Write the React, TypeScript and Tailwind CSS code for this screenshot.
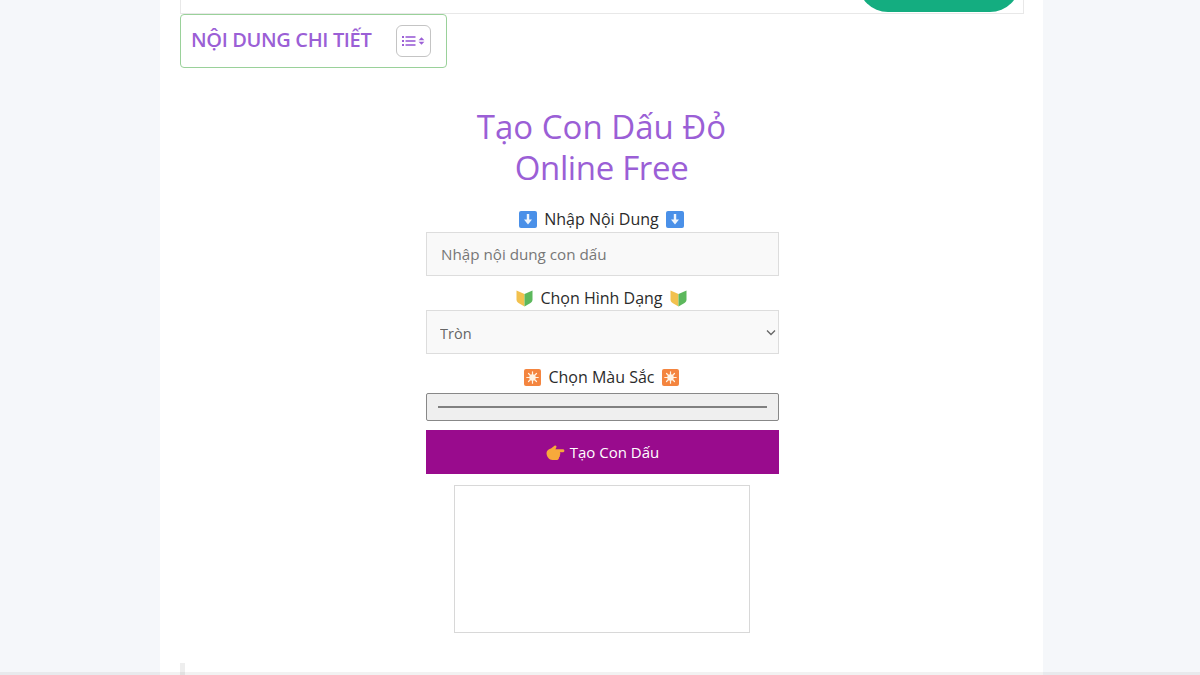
import React from 'react';

const font = "font-['Open_Sans','Noto_Sans',sans-serif]";

const ArrowIcon = () => (
  <svg width="18" height="17" viewBox="0 0 18 17">
    <rect x="0" y="0" width="18" height="17" rx="2" fill="#4a90e8" />
    <path d="M7.8 3H10.2V8.5H13L9 13.5L5 8.5H7.8Z" fill="#eef5fd" />
  </svg>
);

const ShieldIcon = () => (
  <svg width="17" height="18" viewBox="0 0 17 18">
    <path d="M0.5 1.5L8.5 5V17.5L2.5 14C1.2 13.2 0.5 12 0.5 10.5Z" fill="#f2c14e" />
    <path d="M16.5 1.5L8.5 5V17.5L14.5 14C15.8 13.2 16.5 12 16.5 10.5Z" fill="#5cb85c" />
  </svg>
);

const StarIcon = () => (
  <svg width="17" height="17" viewBox="0 0 17 17">
    <rect width="17" height="17" rx="2" fill="#f4853f" />
    <circle cx="8.5" cy="8.5" r="3.2" fill="#fff3e4" />
    <g stroke="#fff3e4" strokeWidth="1.2" strokeLinecap="round">
      <path d="M8.5 2.8V14.2" />
      <path d="M2.8 8.5H14.2" />
      <path d="M4.5 4.5L12.5 12.5" />
      <path d="M12.5 4.5L4.5 12.5" />
    </g>
  </svg>
);

const HandIcon = () => (
  <svg width="19" height="16" viewBox="0 0 19 16">
    <path
      d="M0.5 8C0.5 5.5 3 4.2 5 3.6L8.5 0.8C9.8 0 11.2 1.2 10.2 2.8L9.4 4.2H17.2C18.8 4.2 18.8 7.2 17.2 7.2H13.8C14.6 8 14.5 9.4 13.8 10C14.2 10.9 13.8 12 13 12.3C13.2 13.6 12.3 15 11 15H6.5C3 15 0.5 11.5 0.5 8Z"
      fill="#f7a93b"
    />
  </svg>
);

const Label: React.FC<{ icon: React.ReactNode; text: string }> = ({ icon, text }) => (
  <div className="flex items-center justify-center gap-[7px] pr-[2px] text-[16px] leading-[22px] text-[#2b2b2b]">
    {icon}
    <span>{text}</span>
    {icon}
  </div>
);

export default function App() {
  return (
    <div className={`relative h-[675px] overflow-hidden bg-[#f5f7fa] ${font}`}>
      <div className="ml-[160px] w-[883px] h-[675px] bg-white px-[20px]">
        <div className="h-[14px] w-[844px] overflow-hidden border-x border-b border-[#e8e8e8] flex justify-end pr-[3px]">
          <div className="w-[162px] h-[60px] -mt-[48px] bg-[#14ad80] rounded-[38px] shrink-0"></div>
        </div>

        <div className="w-[267px] h-[54px] border border-[#9ad19a] rounded-[4px] flex items-center justify-between pl-[10px] pr-[15px]">
          <span className="pb-[3px] text-[20px] font-semibold text-[#9b5fd6] whitespace-nowrap tracking-[-0.36px]">NỘI DUNG CHI TIẾT</span>
          <div className="w-[35px] h-[32px] border-[1.5px] border-[#c4c4c4] rounded-[6px] flex items-center justify-center">
            <svg width="24" height="12" viewBox="0 0 24 12">
              <g fill="#9b5fd6">
                <rect x="0" y="1" width="2" height="2" />
                <rect x="0" y="5" width="2" height="2" />
                <rect x="0" y="9" width="2" height="2" />
                <rect x="3.5" y="1.2" width="10" height="1.6" />
                <rect x="3.5" y="5.2" width="10" height="1.6" />
                <rect x="3.5" y="9.2" width="10" height="1.6" />
                <path d="M19.5 2.2L22.4 5.3H16.6Z" />
                <path d="M16.6 6.7H22.4L19.5 9.8Z" />
              </g>
            </svg>
          </div>
        </div>

        <div className="w-[843px]">
          <h1 className="mt-[38px] text-[33px] leading-[41px] font-normal text-[#9b5fd6] text-center">
            Tạo Con Dấu Đỏ
            <br />
            <span className="tracking-[-0.35px]">Online Free</span>
          </h1>

          <div className="ml-[246px] w-[353px] mt-[20px] flex flex-col">
            <Label icon={<ArrowIcon />} text="Nhập Nội Dung" />
            <input
              type="text"
              placeholder="Nhập nội dung con dấu"
              className="mt-[2px] h-[44px] border border-[#ddd] bg-[#f9f9f9] px-[14px] text-[15.2px] text-[#555] placeholder:text-[#777]"
            />
            <div className="mt-[11px]">
              <Label icon={<ShieldIcon />} text="Chọn Hình Dạng" />
            </div>
            <div className="relative mt-[1px] h-[44px]">
              <select className="h-full w-full appearance-none border border-[#ddd] bg-[#f9f9f9] pl-[13px] pt-[4px] text-[14.5px] text-[#666]">
                <option>Tròn</option>
                <option>Vuông</option>
              </select>
              <svg className="absolute right-[3px] top-[19px]" width="10" height="7" viewBox="0 0 10 7" fill="none">
                <path d="M1 1.5L5 5.5L9 1.5" stroke="#666" strokeWidth="1.3" />
              </svg>
            </div>
            <div className="mt-[12px]">
              <Label icon={<StarIcon />} text="Chọn Màu Sắc" />
            </div>
            <input
              type="color"
              defaultValue="#808080"
              className="mt-[5px] h-[28px] w-full border border-[#888] rounded-[2px] bg-[#efefef] px-[11px] py-[12px] [&::-webkit-color-swatch-wrapper]:p-0 [&::-webkit-color-swatch]:border-0"
            />
            <button className="mt-[9px] h-[44px] pt-[1px] bg-[#990b8d] text-white text-[15px] flex items-center justify-center gap-[5px]">
              <HandIcon />
              <span>Tạo Con Dấu</span>
            </button>
          </div>

          <div className="ml-[274px] mt-[11px] w-[296px] h-[148px] border border-[#d8d8d8] bg-white"></div>
        </div>

        <div className="mt-[30px] w-[5px] h-[14px] bg-[#eeeeee]"></div>
      </div>
      <div className="absolute bottom-0 left-0 right-0 h-[3px] bg-black/5"></div>
    </div>
  );
}
